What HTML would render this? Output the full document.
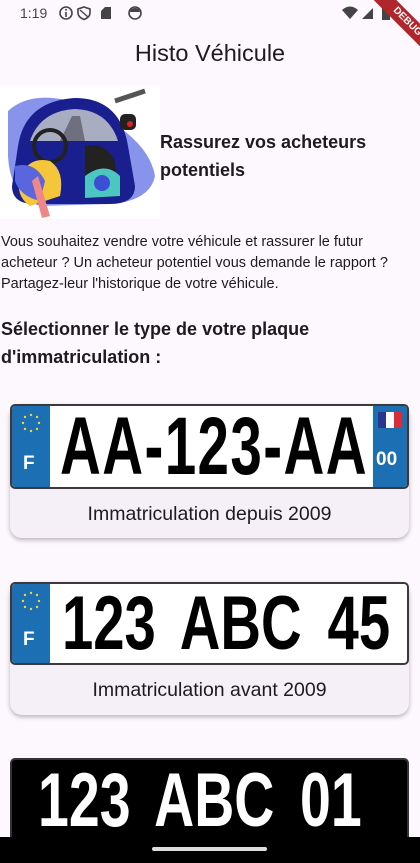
<!DOCTYPE html>
<html><head><meta charset="utf-8">
<style>
*{margin:0;padding:0;box-sizing:border-box}
body{width:420px;height:863px;overflow:hidden;background:#fdf7fe;font-family:"Liberation Sans",sans-serif;color:#1d1b20;position:relative}
.abs{position:absolute}
.plate{position:absolute;left:10px;width:399px;border:2px solid #3a3a3a;border-radius:5px;background:#fff;overflow:hidden}
.eu{position:absolute;left:0;top:0;bottom:0;width:38px;background:#1d6fb3}
.pt{position:absolute;font-family:"Liberation Sans Narrow","Liberation Sans",sans-serif;font-weight:bold;white-space:nowrap;transform-origin:left top}
.card{position:absolute;left:10px;width:399px;background:#f5eff7;border-radius:12px;box-shadow:0 2px 5px rgba(0,0,0,.28)}
.cap{position:absolute;left:0;width:100%;text-align:center;font-size:19.5px;color:#1d1b20}
</style></head><body>
<div class="abs" style="left:20px;top:5px;font-size:14px;color:#444">1:19</div>
<svg class="abs" style="left:58px;top:5px" width="90" height="16" viewBox="0 0 90 16">
<circle cx="8" cy="8" r="6" fill="none" stroke="#444" stroke-width="1.6"/><rect x="7.2" y="7" width="1.6" height="5" fill="#444"/><circle cx="8" cy="4.8" r="1" fill="#444"/>
<path d="M26 2 L32 4 V8 C32 11 29 13.5 26 14.5 C23 13.5 20 11 20 8 V4 Z" fill="none" stroke="#444" stroke-width="1.6"/><path d="M22 5 L30 12" stroke="#444" stroke-width="1.4"/>
<path d="M47 2 H53 V14 H43 V6 Z" fill="#444"/>
<circle cx="77" cy="8" r="6" fill="none" stroke="#444" stroke-width="1.6"/><path d="M72 7 A5 4 0 0 1 82 7 Z" fill="#444"/>
</svg>
<svg class="abs" style="left:342px;top:6px" width="50" height="14"><path d="M0 4 Q8 -3 16 4 L8 13 Z" fill="#444"/><path d="M20 13 L31 2 V13 Z" fill="#444"/><rect x="40" y="1" width="8" height="13" fill="#444"/></svg>
<div class="abs" style="left:352px;top:14px;width:110px;height:16px;background:#b0262b;transform:rotate(45deg);color:#fff;font-size:10px;font-weight:bold;text-align:center;line-height:16px">DEBUG</div>
<div class="abs" style="left:0;top:40px;width:420px;text-align:center;font-size:23.5px;color:#1d1b20">Histo Véhicule</div>
<svg class="abs" style="left:0;top:86px" width="160" height="133" viewBox="0 0 160 133">
<rect width="160" height="133" fill="#fff"/>
<path d="M8 25 Q30 5 70 15 L110 35 Q150 60 155 90 Q150 115 110 118 L40 120 Q10 110 8 70 Z" fill="#8894ec"/>
<path d="M18 60 Q25 15 75 12 Q120 12 128 60 L135 100 Q135 118 110 118 L35 118 Q12 118 12 100 Z" fill="#1a1f8f"/>
<path d="M30 55 Q40 25 75 23 Q108 24 118 55 Z" fill="#a8adc2"/>
<path d="M60 55 L72 30 L80 30 L85 55 Z" fill="#6e7080"/>
<circle cx="50" cy="60" r="16" fill="none" stroke="#222" stroke-width="4"/>
<path d="M20 90 Q30 70 50 75 Q65 85 60 110 L30 120 Q15 110 20 90Z" fill="#f5c53a"/>
<path d="M15 80 Q35 75 45 95 L40 115 Q20 110 15 95Z" fill="#5a66dd"/>
<path d="M38 90 L50 130 L42 132 L32 95Z" fill="#ee8888"/>
<path d="M85 60 Q105 55 115 75 L118 105 L85 110 Z" fill="#222"/>
<path d="M85 90 Q105 75 120 90 L120 110 L85 112Z" fill="#4bc6c0"/>
<circle cx="102" cy="97" r="8" fill="#3b4fd6"/>
<path d="M115 15 L145 5" stroke="#555" stroke-width="5"/>
<rect x="120" y="28" width="16" height="16" rx="5" fill="#222"/><circle cx="130" cy="38" r="3" fill="#d22"/>
</svg>
<div class="abs" style="left:160px;top:128px;font-size:18px;font-weight:bold;line-height:28px;color:#1d1b20">Rassurez vos acheteurs<br>potentiels</div>
<div class="abs" style="left:1px;top:232px;width:412px;font-size:14.5px;line-height:21px;color:#1d1b20">Vous souhaitez vendre votre véhicule et rassurer le futur acheteur ? Un acheteur potentiel vous demande le rapport ? Partagez-leur l'historique de votre véhicule.</div>
<div class="abs" style="left:1px;top:315px;width:415px;font-size:18px;font-weight:bold;line-height:28px;color:#1d1b20">Sélectionner le type de votre plaque d'immatriculation :</div>
<div class="card" style="top:404px;height:134px"><div class="cap" style="top:99px">Immatriculation depuis 2009</div></div>
<div class="plate" style="top:404px;height:85px">
<div class="eu"><svg width="38" height="40"><g fill="#f3d23a">
<circle cx="19" cy="9" r="1.2"/><circle cx="25" cy="11" r="1.2"/><circle cx="27" cy="17" r="1.2"/><circle cx="25" cy="23" r="1.2"/><circle cx="19" cy="25" r="1.2"/><circle cx="13" cy="23" r="1.2"/><circle cx="11" cy="17" r="1.2"/><circle cx="13" cy="11" r="1.2"/></g></svg>
<div style="position:absolute;left:11px;top:47px;color:#fff;font-weight:bold;font-size:19px">F</div></div>
<div class="pt" style="left:48px;top:-6px;font-size:82px;color:#000;transform:scaleX(0.69);letter-spacing:2px">AA-123-AA</div>
<div style="position:absolute;right:0;top:0;bottom:0;width:34px;background:#1d6fb3">
<div style="position:absolute;left:5px;top:6px;width:24px;height:16px;background:linear-gradient(90deg,#2a3590 33%,#fff 33%,#fff 66%,#d92e3a 66%)"></div>
<div style="position:absolute;left:3px;top:43px;color:#fff;font-weight:bold;font-size:19px">00</div></div>
</div>
<div class="card" style="top:582px;height:133px"><div class="cap" style="top:97px">Immatriculation avant 2009</div></div>
<div class="plate" style="top:582px;height:83px">
<div class="eu"><svg width="38" height="40"><g fill="#f3d23a">
<circle cx="19" cy="9" r="1.2"/><circle cx="25" cy="11" r="1.2"/><circle cx="27" cy="17" r="1.2"/><circle cx="25" cy="23" r="1.2"/><circle cx="19" cy="25" r="1.2"/><circle cx="13" cy="23" r="1.2"/><circle cx="11" cy="17" r="1.2"/><circle cx="13" cy="11" r="1.2"/></g></svg>
<div style="position:absolute;left:11px;top:45px;color:#fff;font-weight:bold;font-size:19px">F</div></div>
<div class="pt" style="left:50px;top:-4px;font-size:76px;color:#000;transform:scaleX(0.74);word-spacing:14px">123 ABC 45</div>
</div>
<div class="plate" style="top:758px;height:100px;background:#000;border-color:#333">
<div class="pt" style="left:26px;top:-3px;font-size:76px;color:#fff;transform:scaleX(0.73);word-spacing:14px">123 ABC 01</div>
</div>
<div class="abs" style="left:0;top:837px;width:420px;height:26px;background:#000"></div>
<div class="abs" style="left:152px;top:847px;width:115px;height:4px;border-radius:2px;background:#ddd"></div>
</body></html>
